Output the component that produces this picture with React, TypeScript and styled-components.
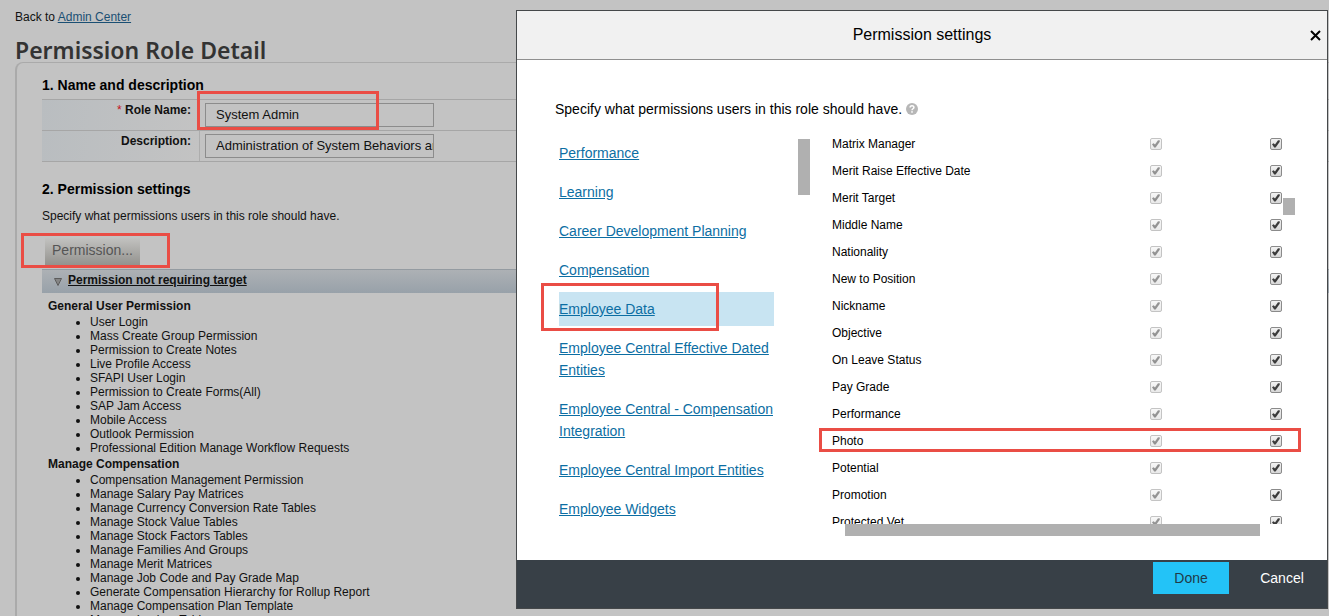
import React from "react";
import styled, { createGlobalStyle, css } from "styled-components";

const ANNOTATION = "#ea4d45";
const LINK = "#0c6ea3";

const GlobalStyle = createGlobalStyle`
  *, *::before, *::after { box-sizing: border-box; }
  body {
    margin: 0;
    background: #c3c3c3;
    color: #111;
    font-family: "Liberation Sans", Arial, sans-serif;
    font-size: 12px;
  }
  button, input { font-family: inherit; }
`;

const Page = styled.div`
  height: 100vh;
  overflow: hidden;
  padding: 9px 0 0 15px;
`;

/* red call-out frame drawn over the element that contains it */
const callout = css`
  content: "";
  position: absolute;
  border: 3px solid ${ANNOTATION};
  pointer-events: none;
`;

const BackLine = styled.p`
  margin: 0;
  line-height: 16px;
  a { color: #1a4f73; }
`;

const PageTitle = styled.h1`
  margin: 10px 0 0;
  height: 27px;
  line-height: 30px;
  font-family: "Trebuchet MS", "Noto Sans", sans-serif;
  font-size: 23px;
  font-weight: 600;
  color: #333;
`;

const Panel = styled.main`
  border: solid #aaa;
  border-width: 1px 0 0 2px;
  border-top-left-radius: 8px;
  padding: 12px 0 0 25px;
`;

const SectionTitle = styled.h2`
  margin: 0;
  font-size: 14px;
  line-height: 20px;
  color: #000;
`;

const Fields = styled.form`
  margin: 4px 0 17px;
  border-top: 1px solid #a6a6a6;
`;

const FieldRow = styled.div`
  display: flex;
  height: 31px;
  border-bottom: 1px solid #a6a6a6;
`;

const FieldLabel = styled.label`
  width: 158px;
  padding: 2px 8px 0 0;
  border-right: 1px solid #adadad;
  background: linear-gradient(100deg, #b9bdc0, #c3c3c3);
  line-height: 16px;
  font-weight: bold;
  text-align: right;
`;

const Required = styled.span`
  color: #c4141c;
  font-weight: normal;
`;

const FieldCell = styled.div<{ $marked?: boolean }>`
  position: relative;
  padding: 3px 0 0 5px;
  ${(p) =>
    p.$marked &&
    css`
      &::after { ${callout} left: -3px; top: -9px; width: 182px; height: 39px; }
    `}
`;

const TextInput = styled.input`
  display: block;
  width: 229px;
  height: 24px;
  padding: 0 0 2px 10px;
  border: 1px solid #8c8c8c;
  background: transparent;
  color: #111;
  font-size: 13px;
`;

const Hint = styled.p`
  margin: 8px 0 0;
  line-height: 18px;
`;

const ButtonArea = styled.div`
  position: relative;
  padding: 13px 0 4px 3px;
  &::after { ${callout} left: -21px; top: 8px; width: 149px; height: 35px; }
`;

const PermissionButton = styled.button`
  display: block;
  width: 95px;
  height: 27px;
  padding: 0 0 4px;
  border: 0;
  background: linear-gradient(#c2c2c0, #93928e);
  color: #555;
  font-size: 14px;
`;

const GroupBar = styled.div`
  display: flex;
  align-items: center;
  gap: 6px;
  height: 24px;
  padding: 0 0 4px 12px;
  border-top: 1px solid #949ba1;
  background: linear-gradient(#adb1b5, #98a1a9);
  a { color: #111; font-weight: bold; }
  svg { margin-top: 4px; }
`;

const Groups = styled.div`
  padding: 4px 0 0 6px;
`;

const GroupTitle = styled.h3`
  margin: 0;
  font-size: 12px;
  line-height: 18px;
`;

const GroupList = styled.ul`
  margin: 0;
  padding-left: 42px;
  line-height: 14px;
`;

const Dialog = styled.div`
  position: fixed;
  top: 10px;
  right: 1px;
  bottom: 7px;
  left: 516px;
  display: flex;
  flex-direction: column;
  border: 1px solid #45484a;
  background: #fff;
  color: #000;
`;

const DialogHeader = styled.header`
  position: relative;
  display: flex;
  align-items: center;
  justify-content: center;
  height: 49px;
  border-bottom: 1px solid #8f8f8f;
  background: #f1f1f1;
`;

const DialogTitle = styled.h2`
  margin: 0;
  font-size: 16px;
  font-weight: normal;
`;

const CloseButton = styled.button`
  position: absolute;
  right: 6px;
  display: flex;
  padding: 0;
  border: 0;
  background: none;
`;

const DialogBody = styled.div`
  flex: 1;
  min-height: 0;
  display: flex;
  flex-direction: column;
  padding: 40px 32px 24px 38px;
`;

const Intro = styled.p`
  display: flex;
  align-items: center;
  gap: 4px;
  margin: 0 0 12px;
  font-size: 14px;
  line-height: 18px;
`;

const Panes = styled.div`
  flex: 1;
  min-height: 0;
  display: flex;
  gap: 22px;
  padding-left: 4px;
`;

const NavPane = styled.nav`
  display: flex;
  gap: 24px;
  padding-top: 6px;
`;

const NavList = styled.ul`
  width: 215px;
  margin: 0;
  padding: 0;
  list-style: none;
  font-size: 14px;
  line-height: 22px;
`;

const NavItem = styled.li<{ $active?: boolean }>`
  position: relative;
  margin-bottom: 5px;
  padding: 6px 0;
  a { color: ${LINK}; }
  ${(p) =>
    p.$active &&
    css`
      background: #c8e4f2;
      &::after { ${callout} left: -18px; top: -9px; width: 178px; height: 48px; }
    `}
`;

const NavThumb = styled.div`
  width: 12px;
  height: 56px;
  margin-top: 3px;
  background: #b0b0b0;
`;

const GridPane = styled.div`
  flex: 1;
  display: grid;
  grid-template-columns: 1fr 12px;
  grid-template-rows: 1fr 12px;
  min-height: 0;
`;

const GridView = styled.div`
  min-height: 0;
  overflow-x: visible;
  overflow-y: clip;
`;

const VerticalThumb = styled.div`
  height: 17px;
  margin-top: 68px;
  background: #b0b0b0;
`;

const HorizontalThumb = styled.div`
  margin: 0 23px 0 13px;
  background: #b0b0b0;
`;

const Table = styled.table`
  width: 100%;
  border-collapse: collapse;
`;

const Row = styled.tr<{ $marked?: boolean }>`
  position: relative;
  height: 27px;
  ${(p) =>
    p.$marked &&
    css`
      &::after { ${callout} left: -13px; right: -18px; top: 1px; height: 24px; }
    `}
`;

const NameCell = styled.th`
  padding: 0;
  font-weight: normal;
  text-align: left;
`;

const CheckCell = styled.td`
  width: 120px;
  padding: 0 1px 0 0;
`;

const CheckWrap = styled.span`
  display: grid;
  justify-content: end;
  > * { grid-area: 1 / 1; }
  svg { pointer-events: none; }
  input:disabled, input:disabled + svg { opacity: 0.5; }
`;

const CheckInput = styled.input`
  appearance: none;
  width: 12px;
  height: 12px;
  margin: 0;
  border: 1px solid #8a8a8a;
  border-radius: 2px;
  background: linear-gradient(#f2f2f2, #d6d6d6);
`;

const DialogFooter = styled.footer`
  display: flex;
  justify-content: flex-end;
  align-items: flex-start;
  gap: 10px;
  height: 48px;
  padding: 2px 2px 0;
  background: #384047;
`;

const FooterButton = styled.button<{ $primary?: boolean }>`
  width: ${(p) => (p.$primary ? 76 : 86)}px;
  height: 32px;
  padding: 0;
  border: 0;
  background: ${(p) => (p.$primary ? "#23c3f7" : "transparent")};
  color: ${(p) => (p.$primary ? "#203a47" : "#fff")};
  font-size: 14px;
`;

const groups = [
  {
    title: "General User Permission",
    items: [
      "User Login",
      "Mass Create Group Permission",
      "Permission to Create Notes",
      "Live Profile Access",
      "SFAPI User Login",
      "Permission to Create Forms(All)",
      "SAP Jam Access",
      "Mobile Access",
      "Outlook Permission",
      "Professional Edition Manage Workflow Requests",
    ],
  },
  {
    title: "Manage Compensation",
    items: [
      "Compensation Management Permission",
      "Manage Salary Pay Matrices",
      "Manage Currency Conversion Rate Tables",
      "Manage Stock Value Tables",
      "Manage Stock Factors Tables",
      "Manage Families And Groups",
      "Manage Merit Matrices",
      "Manage Job Code and Pay Grade Map",
      "Generate Compensation Hierarchy for Rollup Report",
      "Manage Compensation Plan Template",
      "Manage Lookup Tables",
    ],
  },
];

const categories = [
  "Performance",
  "Learning",
  "Career Development Planning",
  "Compensation",
  "Employee Data",
  "Employee Central Effective Dated Entities",
  "Employee Central - Compensation Integration",
  "Employee Central Import Entities",
  "Employee Widgets",
];

const fields = [
  "Matrix Manager",
  "Merit Raise Effective Date",
  "Merit Target",
  "Middle Name",
  "Nationality",
  "New to Position",
  "Nickname",
  "Objective",
  "On Leave Status",
  "Pay Grade",
  "Performance",
  "Photo",
  "Potential",
  "Promotion",
  "Protected Vet",
];

function Check({ label, disabled }: { label: string; disabled?: boolean }) {
  return (
    <CheckWrap>
      <CheckInput type="checkbox" defaultChecked disabled={disabled} aria-label={label} />
      <svg width="12" height="12" viewBox="0 0 12 12" aria-hidden="true">
        <path d="M2 6.2 3.6 5.2 5 6.4 8 2.2 10 2.6 9.6 4 5.6 9.4 4.2 9.4Z" fill="#3a3a3a" />
      </svg>
    </CheckWrap>
  );
}

function HelpIcon() {
  return (
    <svg width="12" height="12" viewBox="0 0 12 12" aria-hidden="true">
      <circle cx="6" cy="6" r="6" fill="#b7b7b7" />
      <path d="M4.1 4.6C4.1 2.2 7.9 2.2 7.9 4.4 7.9 5.8 6 5.7 6 7.2" fill="none" stroke="#fff" strokeWidth="1.5" />
      <rect x="5.2" y="8.2" width="1.6" height="1.5" fill="#fff" />
    </svg>
  );
}

export default function App() {
  return (
    <>
      <GlobalStyle />
      <Page>
        <BackLine>
          Back to <a href="#admin">Admin Center</a>
        </BackLine>
        <PageTitle>Permission Role Detail</PageTitle>
        <Panel>
          <SectionTitle>1. Name and description</SectionTitle>
          <Fields>
            <FieldRow>
              <FieldLabel htmlFor="role-name">
                <Required>*</Required> Role Name:
              </FieldLabel>
              <FieldCell $marked>
                <TextInput id="role-name" defaultValue="System Admin" />
              </FieldCell>
            </FieldRow>
            <FieldRow>
              <FieldLabel htmlFor="role-description">Description:</FieldLabel>
              <FieldCell>
                <TextInput id="role-description" defaultValue="Administration of System Behaviors and" />
              </FieldCell>
            </FieldRow>
          </Fields>
          <SectionTitle>2. Permission settings</SectionTitle>
          <Hint>Specify what permissions users in this role should have.</Hint>
          <ButtonArea>
            <PermissionButton type="button">Permission...</PermissionButton>
          </ButtonArea>
          <GroupBar>
            <svg width="8" height="8" viewBox="0 0 8 8" aria-hidden="true">
              <path d="M.5 .5h7L4 7.5Z" fill="#858585" stroke="#5c5c5c" />
            </svg>
            <a href="#no-target">Permission not requiring target</a>
          </GroupBar>
          <Groups>
            {groups.map((group) => (
              <section key={group.title}>
                <GroupTitle>{group.title}</GroupTitle>
                <GroupList>
                  {group.items.map((item) => (
                    <li key={item}>{item}</li>
                  ))}
                </GroupList>
              </section>
            ))}
          </Groups>
        </Panel>
      </Page>

      <Dialog role="dialog" aria-labelledby="dialog-title">
        <DialogHeader>
          <DialogTitle id="dialog-title">Permission settings</DialogTitle>
          <CloseButton type="button" aria-label="Close">
            <svg width="11" height="11" viewBox="0 0 11 11" aria-hidden="true">
              <path d="M1 1 10 10M10 1 1 10" stroke="#000" strokeWidth="2" />
            </svg>
          </CloseButton>
        </DialogHeader>
        <DialogBody>
          <Intro>
            Specify what permissions users in this role should have.
            <HelpIcon />
          </Intro>
          <Panes>
            <NavPane aria-label="Permission categories">
              <NavList>
                {categories.map((name) => (
                  <NavItem key={name} $active={name === "Employee Data"}>
                    <a href="#category">{name}</a>
                  </NavItem>
                ))}
              </NavList>
              <NavThumb />
            </NavPane>
            <GridPane>
              <GridView>
                <Table>
                  <tbody>
                    {fields.map((name) => (
                      <Row key={name} $marked={name === "Photo"}>
                        <NameCell scope="row">{name}</NameCell>
                        <CheckCell>
                          <Check label={`View ${name}`} disabled />
                        </CheckCell>
                        <CheckCell>
                          <Check label={`Edit ${name}`} />
                        </CheckCell>
                      </Row>
                    ))}
                  </tbody>
                </Table>
              </GridView>
              <VerticalThumb />
              <HorizontalThumb />
            </GridPane>
          </Panes>
        </DialogBody>
        <DialogFooter>
          <FooterButton type="button" $primary>
            Done
          </FooterButton>
          <FooterButton type="button">Cancel</FooterButton>
        </DialogFooter>
      </Dialog>
    </>
  );
}
